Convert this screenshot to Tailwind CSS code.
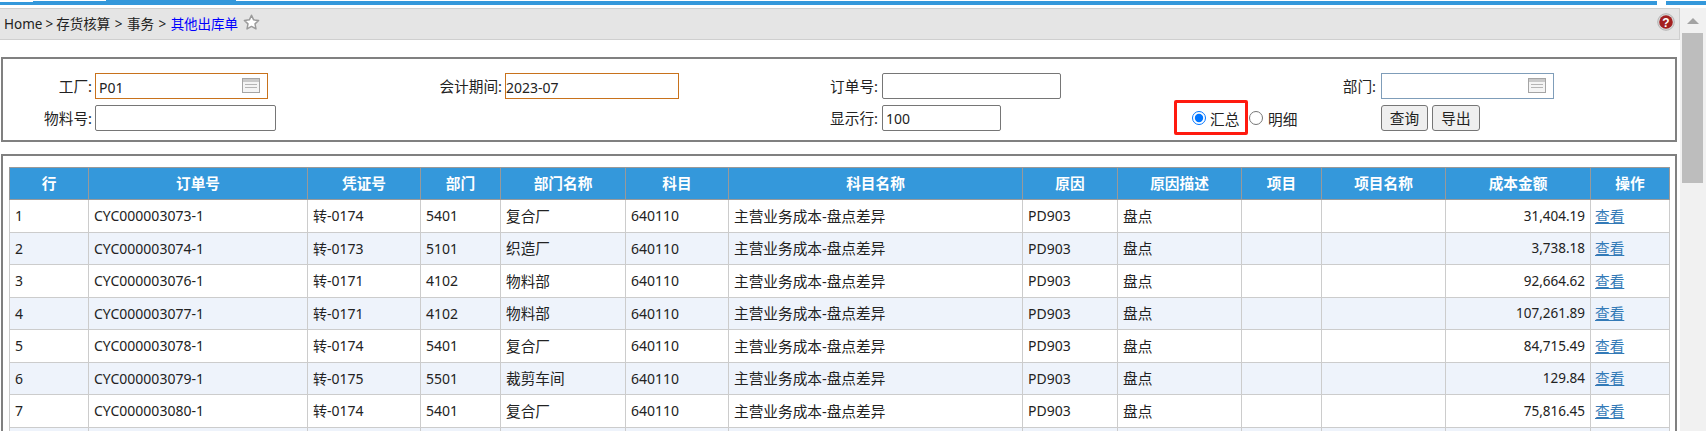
<!DOCTYPE html>
<html lang="zh-CN">
<head>
  <meta charset="UTF-8" />
  <title>其他出库单</title>
  <script src="https://cdn.jsdelivr.net/npm/@tailwindcss/browser@4"></script>
</head>
<body class="h-screen overflow-hidden bg-white text-[14.67px] text-[#222] font-['Noto_Sans','Noto_Sans_CJK_SC',sans-serif]">

<!-- Top tab strip -->
<div class="flex items-end h-[5px]">
  <div class="w-[33px] h-[3px] bg-[#3498db]"></div>
  <div class="w-[73px] h-[4px] bg-[#3498db]"></div>
  <div class="w-[130px] h-[5px] bg-[#3498db]"></div>
  <div class="w-[1421px] h-[4px] bg-[#3498db]"></div>
  <div class="w-[9px]"></div>
  <div class="w-[40px] h-[4px] bg-[#3498db]"></div>
</div>

<div class="flex mt-[3px] h-[423px]">
  <div class="w-[1680px] shrink-0">
    <!-- Breadcrumb -->
    <div class="flex items-center h-[32px] pl-[4px] pr-[5px] bg-[#e5e5e5] border-t border-b border-r border-[#cfcfcf]">
      <span class="text-[13.5px] pt-[1px]">Home<span class="mx-[3px]">&gt;</span>存货核算<span class="mx-[4.5px]">&gt;</span>事务<span class="mx-[4.5px]">&gt;</span><a class="text-[#0000ff]">其他出库单</a></span>
      <svg class="ml-[5px] w-[17px] h-[17px] -mt-[3px]" viewBox="0 0 16 16">
        <path d="M8 1.200l2 4.300 4.700.6-3.400 3.200.9 4.700L8 11.700 3.800 14l.9-4.700L1.300 6.100 6 5.500z" fill="#fff" stroke="#9a9a9a" stroke-width="1.400" stroke-linejoin="round"/>
      </svg>
      <svg class="ml-auto w-[18px] h-[18px] -mt-[5px] -mr-[1px]" viewBox="0 0 18 18">
        <circle cx="9" cy="9" r="8.300" fill="#d8d8d8" stroke="#aaa" stroke-width="0.800"/>
        <circle cx="9" cy="9" r="6.800" fill="#a32020"/>
        <text x="9" y="13.500" text-anchor="middle" fill="#fff" font-size="12" font-weight="700" font-family="Liberation Sans, sans-serif">?</text>
      </svg>
    </div>

    <!-- Filter panel -->
    <form class="relative ml-[1px] mt-[17px] w-[1676px] h-[85px] border-2 border-[#808080] pt-[14px] grid grid-cols-[92px_325px_85px_295px_82px_292px_207px_1fr] grid-rows-[26px_26px] gap-y-[6px] items-center">
      <label class="text-right pr-[3px]">工厂:</label>
      <div class="relative w-[173px] h-[26px]">
        <input value="P01" class="w-full h-full pl-[3px] pt-[2px] text-[14px] border border-[#c8721c] outline-none" />
        <svg class="absolute left-[147px] top-[5px] w-[18px] h-[15px]" viewBox="0 0 18 15">
          <rect x="0.500" y="0.500" width="17" height="14" fill="#f4f4f4" stroke="#a5a5a5"/>
          <rect x="1" y="1" width="16" height="3" fill="#c9c9c9"/>
          <path d="M3 6.500h12M3 9.500h12" stroke="#b5b5b5"/>
        </svg>
      </div>
      <label class="text-right pr-[3px]">会计期间:</label>
      <input value="2023-07" class="w-[174px] h-[26px] pt-[2px] text-[14px] border border-[#c8721c] outline-none" />
      <label class="text-right pr-[4px]">订单号:</label>
      <input class="w-[179px] h-[26px] pl-[3px] text-[14px] border border-[#767676] rounded-[2px] outline-none" />
      <label class="text-right pr-[5px]">部门:</label>
      <div class="relative w-[173px] h-[26px]">
        <input class="w-full h-full pl-[3px] text-[14px] border border-[#7f9db9] outline-none" />
        <svg class="absolute left-[147px] top-[5px] w-[18px] h-[15px]" viewBox="0 0 18 15">
          <rect x="0.500" y="0.500" width="17" height="14" fill="#f4f4f4" stroke="#a5a5a5"/>
          <rect x="1" y="1" width="16" height="3" fill="#c9c9c9"/>
          <path d="M3 6.500h12M3 9.500h12" stroke="#b5b5b5"/>
        </svg>
      </div>

      <label class="text-right pr-[3px]">物料号:</label>
      <input class="w-[181px] h-[26px] pl-[3px] text-[14px] border border-[#767676] rounded-[2px] outline-none" />
      <div></div>
      <div></div>
      <label class="text-right pr-[4px]">显示行:</label>
      <input value="100" class="w-[119px] h-[26px] pl-[3px] text-[14px] border border-[#767676] rounded-[2px] outline-none" />
      <div class="flex items-center pl-[18px]">
        <input type="radio" name="mode" checked class="w-[14px] h-[14px] -mt-[1px] accent-[#0075ff]" />
        <span class="ml-[4px] w-[39px] pt-[1px]">汇总</span>
        <input type="radio" name="mode" class="w-[14px] h-[14px] -mt-[1px]" />
        <span class="ml-[5px] pt-[1px]">明细</span>
      </div>
      <div class="flex gap-[4px]">
        <button type="button" class="w-[47px] h-[26px] bg-[#efefef] border border-[#767676] rounded-[3px]">查询</button>
        <button type="button" class="w-[48px] h-[26px] bg-[#efefef] border border-[#767676] rounded-[3px]">导出</button>
      </div>

      <!-- red annotation around the summary option -->
      <div class="absolute left-[1171px] top-[41px] w-[74px] h-[35px] border-[3px] border-[#ff1a0f] rounded-[2px]"></div>
    </form>

    <!-- Results panel -->
    <div class="ml-[1px] mt-[12px] w-[1676px] h-[300px] border-2 border-[#808080] pl-[6px] pt-[11px]">
      <table class="table-fixed border-collapse w-[1660px] [&_td]:border [&_td]:border-[#ccc] [&_td]:px-[5px] [&_td]:h-[32.5px] [&_td]:whitespace-nowrap [&_td:is(:nth-child(-n+4),:nth-child(6),:nth-child(8))]:text-[14px] [&_td:nth-child(12)]:text-[13.5px] [&_th]:border [&_th]:border-[#999] [&_th]:h-[32px] [&_th]:pb-[2px] [&_th]:text-white [&_th]:font-bold [&_th]:bg-[#3498db]">
        <colgroup>
          <col class="w-[79px]" /><col class="w-[219px]" /><col class="w-[113px]" /><col class="w-[80px]" />
          <col class="w-[125px]" /><col class="w-[103px]" /><col class="w-[294px]" /><col class="w-[95px]" />
          <col class="w-[124px]" /><col class="w-[80px]" /><col class="w-[124px]" /><col class="w-[145px]" /><col class="w-[79px]" />
        </colgroup>
        <thead>
          <tr>
            <th>行</th><th>订单号</th><th>凭证号</th><th>部门</th><th>部门名称</th><th>科目</th><th>科目名称</th><th>原因</th><th>原因描述</th><th>项目</th><th>项目名称</th><th>成本金额</th><th>操作</th>
          </tr>
        </thead>
        <tbody>
          <tr>
            <td>1</td><td>CYC000003073-1</td><td>转-0174</td><td>5401</td><td>复合厂</td><td>640110</td><td>主营业务成本-盘点差异</td><td>PD903</td><td>盘点</td><td></td><td></td><td class="text-right">31,404.19</td><td class="!pl-[4px]"><a class="text-[#337ab7] underline">查看</a></td>
          </tr>
          <tr class="bg-[#eef3fb]">
            <td>2</td><td>CYC000003074-1</td><td>转-0173</td><td>5101</td><td>织造厂</td><td>640110</td><td>主营业务成本-盘点差异</td><td>PD903</td><td>盘点</td><td></td><td></td><td class="text-right">3,738.18</td><td class="!pl-[4px]"><a class="text-[#337ab7] underline">查看</a></td>
          </tr>
          <tr>
            <td>3</td><td>CYC000003076-1</td><td>转-0171</td><td>4102</td><td>物料部</td><td>640110</td><td>主营业务成本-盘点差异</td><td>PD903</td><td>盘点</td><td></td><td></td><td class="text-right">92,664.62</td><td class="!pl-[4px]"><a class="text-[#337ab7] underline">查看</a></td>
          </tr>
          <tr class="bg-[#eef3fb]">
            <td>4</td><td>CYC000003077-1</td><td>转-0171</td><td>4102</td><td>物料部</td><td>640110</td><td>主营业务成本-盘点差异</td><td>PD903</td><td>盘点</td><td></td><td></td><td class="text-right">107,261.89</td><td class="!pl-[4px]"><a class="text-[#337ab7] underline">查看</a></td>
          </tr>
          <tr>
            <td>5</td><td>CYC000003078-1</td><td>转-0174</td><td>5401</td><td>复合厂</td><td>640110</td><td>主营业务成本-盘点差异</td><td>PD903</td><td>盘点</td><td></td><td></td><td class="text-right">84,715.49</td><td class="!pl-[4px]"><a class="text-[#337ab7] underline">查看</a></td>
          </tr>
          <tr class="bg-[#eef3fb]">
            <td>6</td><td>CYC000003079-1</td><td>转-0175</td><td>5501</td><td>裁剪车间</td><td>640110</td><td>主营业务成本-盘点差异</td><td>PD903</td><td>盘点</td><td></td><td></td><td class="text-right">129.84</td><td class="!pl-[4px]"><a class="text-[#337ab7] underline">查看</a></td>
          </tr>
          <tr>
            <td>7</td><td>CYC000003080-1</td><td>转-0174</td><td>5401</td><td>复合厂</td><td>640110</td><td>主营业务成本-盘点差异</td><td>PD903</td><td>盘点</td><td></td><td></td><td class="text-right">75,816.45</td><td class="!pl-[4px]"><a class="text-[#337ab7] underline">查看</a></td>
          </tr>
          <tr class="bg-[#eef3fb]">
            <td></td><td></td><td></td><td></td><td></td><td></td><td></td><td></td><td></td><td></td><td></td><td></td><td></td>
          </tr>
        </tbody>
      </table>
    </div>
  </div>

  <!-- Page scrollbar -->
  <div class="w-[26px] shrink-0 bg-[#f1f1f1] pl-[2px] pr-[3px]">
    <div class="flex justify-center items-center h-[25px]">
      <div class="w-0 h-0 border-x-[6px] border-x-transparent border-b-[6px] border-b-[#a3a3a3]"></div>
    </div>
    <div class="h-[150px] bg-[#bdbdbd]"></div>
  </div>
</div>
</body>
</html>
